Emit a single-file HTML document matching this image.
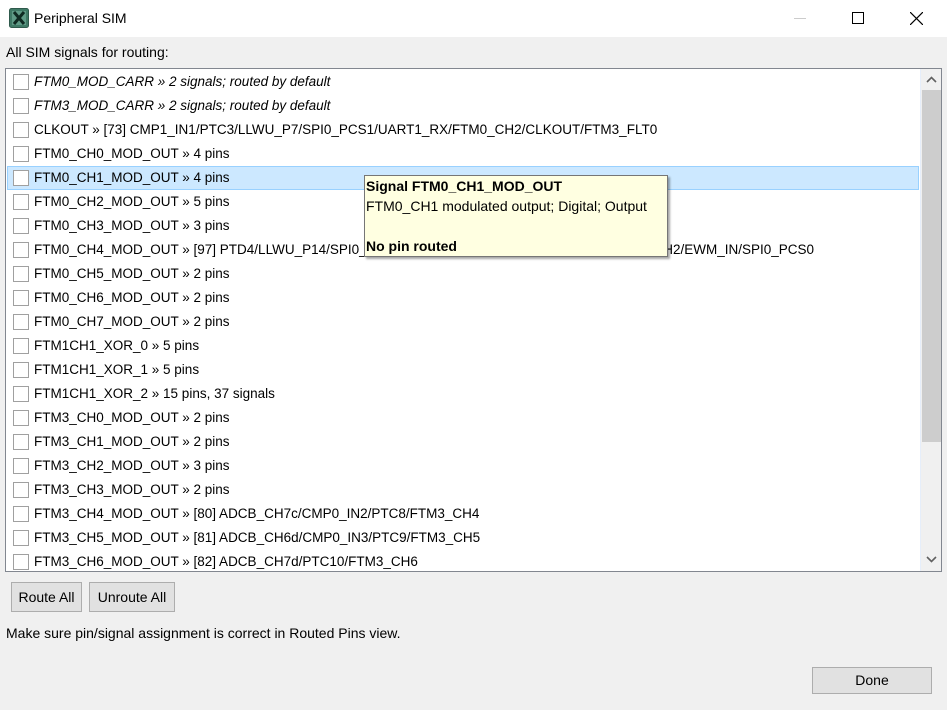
<!DOCTYPE html>
<html><head><meta charset="utf-8"><style>
*{margin:0;padding:0;box-sizing:border-box}
body{width:947px;height:710px;background:#f0f0f0;font-family:"Liberation Sans",sans-serif;font-size:13.5px;color:#000;position:relative;overflow:hidden}
.title{position:absolute;left:0;top:0;width:947px;height:37px;background:#fff}
.title .t{position:absolute;left:34px;top:10px;font-size:14px}
.abs{position:absolute}
.list{position:absolute;left:5px;top:68px;width:937px;height:504px;background:#fff;border:1px solid #828790;overflow:hidden}
.row{position:absolute;left:1px;width:912px;height:24px;line-height:24px;padding-left:27px;white-space:nowrap}
.row .cb{position:absolute;left:6px;top:4px;width:16px;height:16px;border:1px solid #a0a0a0;background:#fff}
.sel{background:#cce8ff;border:1px solid #99d1ff;line-height:22px}
.sel .cb{top:3px;left:5px}
.sel{padding-left:26px}
i{font-style:italic}
.sb{position:absolute;left:914px;top:0;width:21px;height:502px;background:#f0f0f0;border-left:1px solid #e6eefa}
.thumb{position:absolute;left:1px;top:21px;width:19px;height:352px;background:#cdcdcd}
.btn{position:absolute;background:#e1e1e1;border:1px solid #adadad;text-align:center;font-size:14px}
.tip{position:absolute;left:364px;top:175px;width:304px;height:82px;background:#ffffe1;border:1px solid #767676;box-shadow:2px 2px 2px rgba(0,0,0,.35);padding:0 0 0 1px;font-size:14px;line-height:20px;white-space:nowrap}
</style></head><body>
<div class="title">
<svg class="abs" style="left:9px;top:8px" width="20" height="20"><rect x="0.5" y="0.5" width="19" height="19" rx="2" fill="#3f7a66" stroke="#2f5a4c"/><rect x="3" y="3" width="14" height="14" fill="#5f9a86"/><path d="M5 4 L15 16 M15 4 L5 16" stroke="#0f2a22" stroke-width="3"/></svg>
<div class="t">Peripheral SIM</div>
<div class="abs" style="left:794px;top:18px;width:12px;height:1px;background:#ccc"></div>
<div class="abs" style="left:852px;top:12px;width:12px;height:12px;border:1px solid #000"></div>
<svg class="abs" style="left:910px;top:12px" width="13" height="13"><path d="M0 0L13 13M13 0L0 13" stroke="#000" stroke-width="1.2"/></svg>
</div>
<div class="abs" style="left:6px;top:44px;font-size:14px">All SIM signals for routing:</div>
<div class="list">
<div class="row" style="top:1px"><span class="cb"></span><i>FTM0_MOD_CARR » 2 signals; routed by default</i></div>
<div class="row" style="top:25px"><span class="cb"></span><i>FTM3_MOD_CARR » 2 signals; routed by default</i></div>
<div class="row" style="top:49px"><span class="cb"></span>CLKOUT » [73] CMP1_IN1/PTC3/LLWU_P7/SPI0_PCS1/UART1_RX/FTM0_CH2/CLKOUT/FTM3_FLT0</div>
<div class="row" style="top:73px"><span class="cb"></span>FTM0_CH0_MOD_OUT » 4 pins</div>
<div class="row sel" style="top:97px"><span class="cb"></span>FTM0_CH1_MOD_OUT » 4 pins</div>
<div class="row" style="top:121px"><span class="cb"></span>FTM0_CH2_MOD_OUT » 5 pins</div>
<div class="row" style="top:145px"><span class="cb"></span>FTM0_CH3_MOD_OUT » 3 pins</div>
<div class="row" style="top:169px"><span class="cb"></span>FTM0_CH4_MOD_OUT » [97] PTD4/LLWU_P14/SPI0_PCS1/UART0_RTS_b/FTM0_CH4/FTM2_CH4_CH2/EWM_IN/SPI0_PCS0</div>
<div class="row" style="top:193px"><span class="cb"></span>FTM0_CH5_MOD_OUT » 2 pins</div>
<div class="row" style="top:217px"><span class="cb"></span>FTM0_CH6_MOD_OUT » 2 pins</div>
<div class="row" style="top:241px"><span class="cb"></span>FTM0_CH7_MOD_OUT » 2 pins</div>
<div class="row" style="top:265px"><span class="cb"></span>FTM1CH1_XOR_0 » 5 pins</div>
<div class="row" style="top:289px"><span class="cb"></span>FTM1CH1_XOR_1 » 5 pins</div>
<div class="row" style="top:313px"><span class="cb"></span>FTM1CH1_XOR_2 » 15 pins, 37 signals</div>
<div class="row" style="top:337px"><span class="cb"></span>FTM3_CH0_MOD_OUT » 2 pins</div>
<div class="row" style="top:361px"><span class="cb"></span>FTM3_CH1_MOD_OUT » 2 pins</div>
<div class="row" style="top:385px"><span class="cb"></span>FTM3_CH2_MOD_OUT » 3 pins</div>
<div class="row" style="top:409px"><span class="cb"></span>FTM3_CH3_MOD_OUT » 2 pins</div>
<div class="row" style="top:433px"><span class="cb"></span>FTM3_CH4_MOD_OUT » [80] ADCB_CH7c/CMP0_IN2/PTC8/FTM3_CH4</div>
<div class="row" style="top:457px"><span class="cb"></span>FTM3_CH5_MOD_OUT » [81] ADCB_CH6d/CMP0_IN3/PTC9/FTM3_CH5</div>
<div class="row" style="top:481px"><span class="cb"></span>FTM3_CH6_MOD_OUT » [82] ADCB_CH7d/PTC10/FTM3_CH6</div>
<div class="sb"><div class="thumb"></div>
<svg class="abs" style="left:5px;top:7px" width="11" height="7"><path d="M1 6L5.5 1.5L10 6" stroke="#606060" stroke-width="1.6" fill="none"/></svg>
<svg class="abs" style="left:5px;top:487px" width="11" height="7"><path d="M1 1L5.5 5.5L10 1" stroke="#606060" stroke-width="1.6" fill="none"/></svg>
</div>
</div>
<div class="tip"><b>Signal FTM0_CH1_MOD_OUT</b><br>FTM0_CH1 modulated output; Digital; Output<br><br><b>No pin routed</b></div>
<div class="btn" style="left:11px;top:582px;width:71px;height:30px;line-height:28px">Route All</div>
<div class="btn" style="left:89px;top:582px;width:86px;height:30px;line-height:28px">Unroute All</div>
<div class="abs" style="left:6px;top:625px;font-size:14px">Make sure pin/signal assignment is correct in Routed Pins view.</div>
<div class="btn" style="left:812px;top:667px;width:120px;height:27px;line-height:25px">Done</div>
</body></html>
